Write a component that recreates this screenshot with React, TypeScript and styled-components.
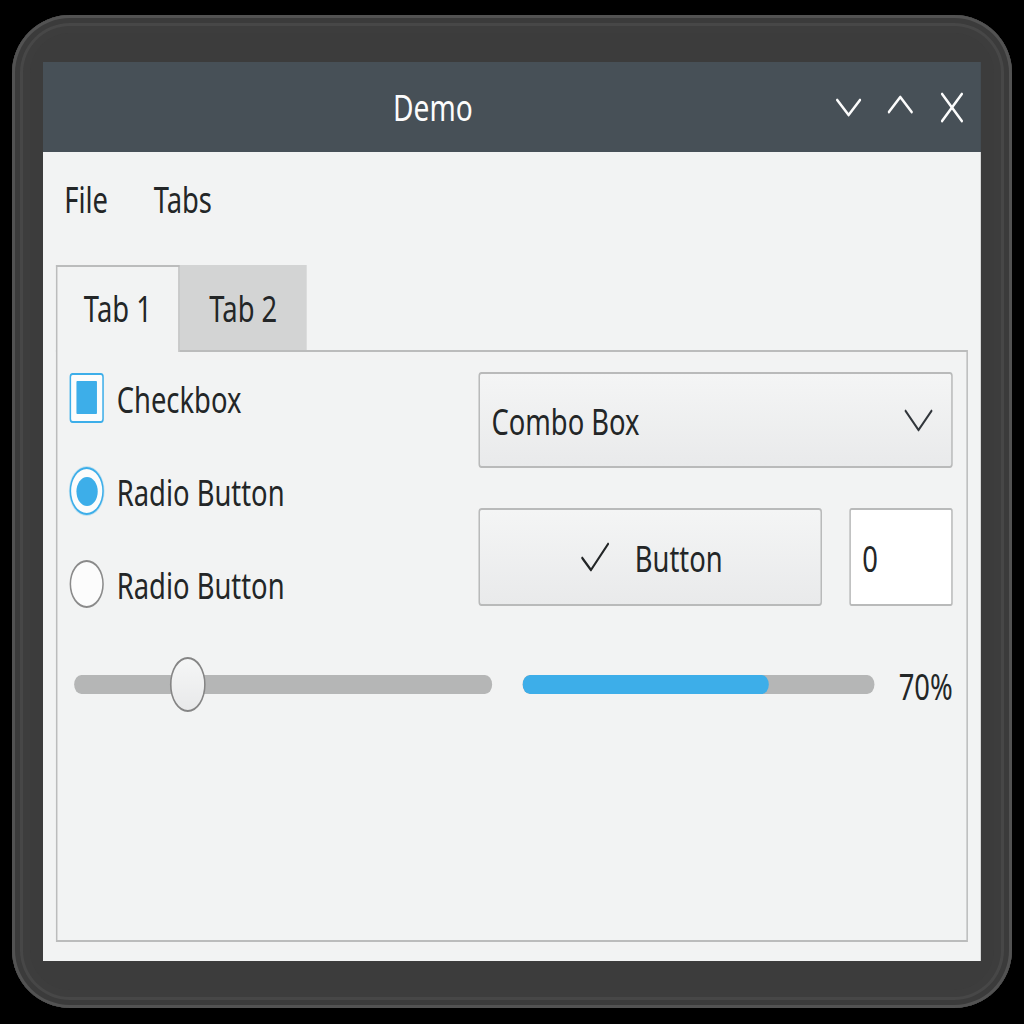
import React from "react";
import styled, { createGlobalStyle } from "styled-components";

const GlobalStyle = createGlobalStyle`
  html, body {
    margin: 0;
    padding: 0;
    background: #000000;
    overflow: hidden;
  }
  body {
    font-family: "Noto Sans", "Open Sans", sans-serif;
  }
`;

const Screen = styled.div`
  width: 1024px;
  height: 1024px;
  padding: 15px 0 0 12px;
  box-sizing: border-box;
  background: #000000;
`;

const Frame = styled.div`
  width: 1000px;
  height: 993px;
  box-sizing: border-box;
  padding: 47px 31px;
  border-radius: 58px;
  background: #3c3c3c;
  box-shadow: inset 0 0 0 3px #525252, inset 0 0 0 8px #3b3b3b,
    inset 0 0 0 11px #474747, inset 0 0 0 18px #3d3d3d;
`;

/* The reference is a horizontally squeezed capture: the window is laid out
   at its natural width and squeezed as one piece. */
const Window = styled.div`
  width: 1234px;
  height: 899px;
  display: flex;
  flex-direction: column;
  transform: scaleX(0.76);
  transform-origin: left top;
`;

const TitleBar = styled.div`
  height: 90px;
  flex-shrink: 0;
  display: flex;
  align-items: center;
  background: #475057;
  padding-right: 4px;
`;

const Title = styled.div`
  flex: 1;
  text-align: center;
  color: #fcfcfc;
  font-size: 37px;
  line-height: 49px;
  margin-top: -2px;
`;

const WindowButtons = styled.div`
  display: flex;
`;

const WinButton = styled.div`
  width: 68px;
  height: 40px;
  display: flex;
  align-items: center;
  justify-content: center;
`;

const Body = styled.div`
  flex: 1;
  display: flex;
  flex-direction: column;
  background: #f2f3f3;
  padding: 0 17px 19px;
`;

const MenuBar = styled.div`
  height: 113px;
  flex-shrink: 0;
  box-sizing: border-box;
  padding: 23px 0 0 11px;
  display: flex;
  gap: 60px;
`;

const Text = styled.span<{ $drop?: number }>`
  font-size: 36px;
  line-height: 49px;
  color: #232627;
  white-space: nowrap;
  padding-top: ${(p) => p.$drop ?? 0}px;
`;

const TabWidget = styled.div`
  flex: 1;
  display: flex;
  flex-direction: column;
`;

const TabBar = styled.div`
  display: flex;
  height: 85px;
  flex-shrink: 0;
`;

const Tab = styled.div<{ $active?: boolean; $w: number }>`
  width: ${(p) => p.$w}px;
  box-sizing: border-box;
  display: flex;
  justify-content: center;
  padding-top: ${(p) => (p.$active ? 17 : 19)}px;
  background: ${(p) => (p.$active ? "#f2f3f3" : "#d3d4d4")};
  border: ${(p) => (p.$active ? "2px solid #bbbcbc" : "none")};
  border-bottom: none;
  position: relative;
  z-index: 1;
  height: ${(p) => (p.$active ? 87 : 85)}px;
`;

const Panel = styled.div`
  flex: 1;
  border: 2px solid #bbbcbc;
  background: #f2f3f3;
  padding: 21px 18px 0 16px;
  display: flex;
  flex-direction: column;
`;

const TopGrid = styled.div`
  display: grid;
  grid-template-columns: 1fr 624px;
  align-items: start;
`;

const LeftColumn = styled.div`
  display: flex;
  flex-direction: column;
  gap: 43px;
`;

const OptionRow = styled.div`
  height: 50px;
  display: flex;
  align-items: center;
  gap: 17px;
`;

const CheckIndicator = styled.div`
  width: 45px;
  height: 50px;
  box-sizing: border-box;
  border: 2px solid #3daee9;
  border-radius: 4px;
  background: #fcfcfc;
  padding: 6px 7px 7px;
  display: flex;
`;

const CheckFill = styled.div`
  flex: 1;
  background: #3daee9;
  border-radius: 1px;
`;

const RadioIndicator = styled.div<{ $checked?: boolean }>`
  width: 45px;
  height: 48px;
  box-sizing: border-box;
  border-radius: 50%;
  border: 2px solid ${(p) => (p.$checked ? "#3daee9" : "#8a8a8a")};
  background: #fcfcfc;
  display: flex;
  align-items: center;
  justify-content: center;
  box-shadow: ${(p) => (p.$checked ? "0 0 0 1px rgba(61,174,233,0.25)" : "none")};
`;

const RadioDot = styled.div`
  width: 28px;
  height: 29px;
  border-radius: 50%;
  background: #3daee9;
`;

const RightColumn = styled.div`
  display: flex;
  flex-direction: column;
  gap: 40px;
  margin-top: -1px;
`;

const ComboBox = styled.div`
  height: 96px;
  box-sizing: border-box;
  border: 2px solid #b9baba;
  border-radius: 4px;
  background: linear-gradient(#f4f5f5, #e9eaeb);
  display: flex;
  align-items: center;
  justify-content: space-between;
  padding: 0 24px 0 15px;
`;

const ButtonRow = styled.div`
  display: flex;
  gap: 36px;
  height: 98px;
`;

const PushButton = styled.div`
  flex: 1;
  box-sizing: border-box;
  border: 2px solid #b9baba;
  border-radius: 4px;
  background: linear-gradient(#f4f5f5, #e9eaeb);
  display: flex;
  align-items: center;
  justify-content: center;
  gap: 34px;
  padding-left: 4px;
`;

const SpinBox = styled.div`
  width: 136px;
  box-sizing: border-box;
  border: 2px solid #b9baba;
  border-radius: 3px;
  background: #ffffff;
  display: flex;
  align-items: center;
  padding: 0 0 0 15px;
`;

const SliderRow = styled.div`
  margin-top: 48px;
  height: 55px;
  display: flex;
  align-items: center;
  padding-left: 6px;
`;

const Slider = styled.div`
  width: 550px;
  height: 55px;
  position: relative;
  display: flex;
  align-items: center;
  margin-right: 40px;
`;

const Groove = styled.div`
  width: 100%;
  height: 19px;
  border-radius: 10px;
  background: #b5b6b6;
`;

const Handle = styled.div`
  position: absolute;
  top: 0;
  width: 47px;
  height: 55px;
  box-sizing: border-box;
  border-radius: 50%;
  border: 2px solid #858585;
  background: linear-gradient(#f5f6f6, #e8e9ea);
`;

const Progress = styled.div`
  flex: 1;
  height: 19px;
  border-radius: 10px;
  background: #b5b6b6;
  overflow: hidden;
`;

const ProgressFill = styled.div`
  height: 100%;
  border-radius: 10px;
  background: #3daee9;
`;

const ProgressLabel = styled(Text)`
  margin-left: 32px;
`;

const ChevronDown = ({ color = "#fcfcfc", w = 34, h = 19, sw = 3 }) => (
  <svg width={w} height={h} viewBox={`0 0 ${w} ${h}`}>
    <polyline
      points={`2,2 ${w / 2},${h - 2} ${w - 2},2`}
      fill="none"
      stroke={color}
      strokeWidth={sw}
      strokeLinecap="round"
      strokeLinejoin="round"
    />
  </svg>
);

const ChevronUp = () => (
  <svg width={34} height={25} viewBox="0 0 34 25">
    <polyline
      points="2,17 17,2 32,17"
      fill="none"
      stroke="#fcfcfc"
      strokeWidth={3}
      strokeLinecap="round"
      strokeLinejoin="round"
    />
  </svg>
);

const CloseIcon = () => (
  <svg width={30} height={31} viewBox="0 0 30 31">
    <g stroke="#fcfcfc" strokeWidth={3} strokeLinecap="round">
      <line x1="2" y1="2" x2="28" y2="29" />
      <line x1="28" y1="2" x2="2" y2="29" />
    </g>
  </svg>
);

const CheckIcon = () => (
  <svg width={37} height={30} viewBox="0 0 37 30">
    <polyline
      points="1.5,16 13,28 35.5,2"
      fill="none"
      stroke="#232627"
      strokeWidth={2.6}
      strokeLinecap="round"
      strokeLinejoin="round"
    />
  </svg>
);

export default function App() {
  const sliderValue = 25;
  const progress = 70;
  return (
    <>
      <GlobalStyle />
      <Screen>
        <Frame>
          <Window>
            <TitleBar>
              <Title>Demo</Title>
              <WindowButtons>
                <WinButton>
                  <ChevronDown />
                </WinButton>
                <WinButton>
                  <ChevronUp />
                </WinButton>
                <WinButton>
                  <CloseIcon />
                </WinButton>
              </WindowButtons>
            </TitleBar>
            <Body>
              <MenuBar>
                <Text>File</Text>
                <Text>Tabs</Text>
              </MenuBar>
              <TabWidget>
                <TabBar>
                  <Tab $active $w={163}>
                    <Text>Tab 1</Text>
                  </Tab>
                  <Tab $w={167}>
                    <Text>Tab 2</Text>
                  </Tab>
                </TabBar>
                <Panel>
                  <TopGrid>
                    <LeftColumn>
                      <OptionRow>
                        <CheckIndicator>
                          <CheckFill />
                        </CheckIndicator>
                        <Text $drop={2}>Checkbox</Text>
                      </OptionRow>
                      <OptionRow>
                        <RadioIndicator $checked>
                          <RadioDot />
                        </RadioIndicator>
                        <Text $drop={3}>Radio Button</Text>
                      </OptionRow>
                      <OptionRow>
                        <RadioIndicator />
                        <Text $drop={3}>Radio Button</Text>
                      </OptionRow>
                    </LeftColumn>
                    <RightColumn>
                      <ComboBox>
                        <Text $drop={2}>Combo Box</Text>
                        <ChevronDown color="#31363b" w={38} h={23} sw={2.6} />
                      </ComboBox>
                      <ButtonRow>
                        <PushButton>
                          <CheckIcon />
                          <Text $drop={2}>Button</Text>
                        </PushButton>
                        <SpinBox>
                          <Text $drop={2}>0</Text>
                        </SpinBox>
                      </ButtonRow>
                    </RightColumn>
                  </TopGrid>
                  <SliderRow>
                    <Slider>
                      <Groove />
                      <Handle style={{ left: `${(sliderValue / 100) * (550 - 47)}px` }} />
                    </Slider>
                    <Progress>
                      <ProgressFill style={{ width: `${progress}%` }} />
                    </Progress>
                    <ProgressLabel $drop={3}>{progress}%</ProgressLabel>
                  </SliderRow>
                </Panel>
              </TabWidget>
            </Body>
          </Window>
        </Frame>
      </Screen>
    </>
  );
}
